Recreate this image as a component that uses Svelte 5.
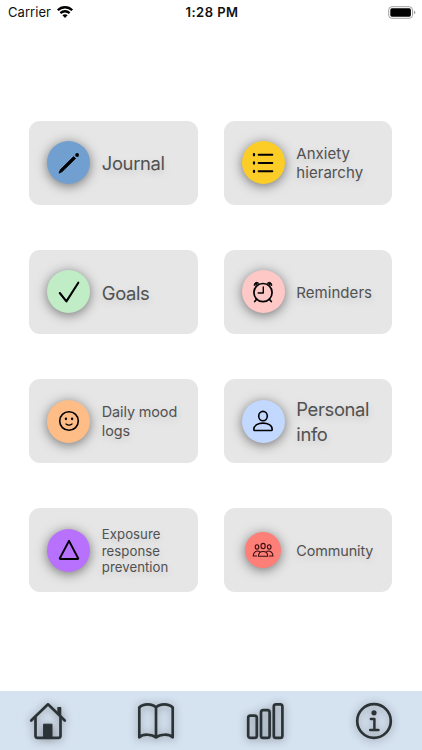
<script>
  const cards = [
    { icon: 'pencil', label: ['Journal'], color: '#719fd0', size: 's20' },
    { icon: 'list', label: ['Anxiety', 'hierarchy'], color: '#fdcd27', size: 's16' },
    { icon: 'check', label: ['Goals'], color: '#c0edc6', size: 's20' },
    { icon: 'alarm', label: ['Reminders'], color: '#fec8c7', size: 's16' },
    { icon: 'smile', label: ['Daily mood', 'logs'], color: '#febd86', size: 's15' },
    { icon: 'person', label: ['Personal', 'info'], color: '#c2d8fe', size: 's20' },
    { icon: 'triangle', label: ['Exposure', 'response', 'prevention'], color: '#b871fd', size: 's14' },
    { icon: 'people', label: ['Community'], color: '#fe7e78', size: 's15', small: true }
  ];

  const tabs = ['home', 'book', 'stats', 'info'];
</script>

<div class="screen">
  <header class="status-bar">
    <div class="carrier">
      <span>Carrier</span>
      <svg width="16" height="12" viewBox="0 0 16 12" fill="none" stroke="#000" stroke-width="2.3">
        <path d="M0.8 4.3C4.8 0.2 11.2 0.2 15.2 4.3" />
        <path d="M3.4 7.1C6 4.6 10 4.6 12.6 7.1" />
        <path d="M5.4 9.2C6.9 7.8 9.1 7.8 10.6 9.2L8 11.9Z" fill="#000" stroke="none" />
      </svg>
    </div>
    <div class="time">1:28 PM</div>
    <div class="battery">
      <svg width="28" height="13" viewBox="0 0 28 13">
        <rect x="0.7" y="0.7" width="23.8" height="11.6" rx="3.2" fill="none" stroke="#a2a2a2" />
        <rect x="2.3" y="2.3" width="20.6" height="8.4" rx="1.6" />
        <path d="M25.8 4.6Q27.4 5.2 27.4 6.5T25.8 8.4Z" fill="#a2a2a2" />
      </svg>
    </div>
  </header>

  <main class="grid">
    {#each cards as card (card.icon)}
      <button class="card">
        <span class="icon-slot">
          <span class="circle" class:small={card.small} style="background: {card.color}">
            <svg width="22" height="22" viewBox="-1 -1 22 22" fill="none" stroke="#000" stroke-width="1.6" stroke-linecap="round" stroke-linejoin="round">
              {#if card.icon === 'pencil'}
                <path d="M0.2 19.8L1.3 16.7L14.6 3.6L16.6 5.5L3.2 18.6Z" fill="#000" stroke-width="0.8" />
                <circle cx="18.1" cy="2" r="1.9" fill="#000" stroke="none" />
              {:else if card.icon === 'list'}
                <path d="M5.7 1.7H19.3M5.7 10H19.3M5.7 18.3H19.3" stroke-width="2.1" />
                <path d="M1 1.2V2.3M1 9.5V10.6M1 17.8V18.9" stroke-width="2.3" />
              {:else if card.icon === 'check'}
                <path d="M0.8 11L7.4 19.4L19.3 0.7" stroke-width="2.1" />
              {:else if card.icon === 'alarm'}
                <circle cx="10" cy="10.6" r="9.1" stroke-width="1.7" />
                <path d="M10.3 5V11H5.2" stroke-width="1.4" />
                <path d="M3.7 17.2L1.7 19.6M16.3 17.2L18.3 19.6" />
                <path d="M1.2 3.2C1.2 0.5 3.8 -0.6 5.4 1ZM18.8 3.2C18.8 0.5 16.2 -0.6 14.6 1Z" fill="#000" stroke-width="1" />
              {:else if card.icon === 'smile'}
                <circle cx="10" cy="10" r="9.3" />
                <path d="M7 13Q10 15.2 13 13" stroke-width="1.3" />
                <ellipse cx="6.9" cy="7.8" rx="1.2" ry="1.4" fill="#000" stroke="none" />
                <ellipse cx="13.1" cy="7.8" rx="1.2" ry="1.4" fill="#000" stroke="none" />
              {:else if card.icon === 'person'}
                <ellipse cx="10" cy="5.1" rx="4.3" ry="4.7" />
                <path d="M0.8 18.4C0.8 10 19.2 10 19.2 18.4Q19.2 19.5 18.2 19.5H1.8Q0.8 19.5 0.8 18.4Z" />
              {:else if card.icon === 'triangle'}
                <path d="M10 0.9L0.9 18.1Q0.6 19.1 1.5 19.1H18.5Q19.4 19.1 19.1 18.1Z" stroke-width="2" />
              {:else}
                <g stroke="#3a0f0e" stroke-width="1.1">
                  <ellipse cx="10.1" cy="6.1" rx="2.1" ry="2.7" />
                  <ellipse cx="4" cy="6.9" rx="1.8" ry="2.2" />
                  <ellipse cx="16.2" cy="6.9" rx="1.8" ry="2.2" />
                  <path d="M5.5 16.2C5.5 10 14.7 10 14.7 16.2Z" />
                  <path d="M6.4 11.5C3.8 10.4 0.2 11.5 0.2 16H3.6M13.8 11.5C16.4 10.4 20 11.5 20 16H16.6" />
                </g>
              {/if}
            </svg>
          </span>
        </span>
        <span class="label {card.size}">
          {#each card.label as line}
            <span>{line}</span>
          {/each}
        </span>
      </button>
    {/each}
  </main>

  <nav class="tab-bar">
    {#each tabs as tab}
      <button class="tab" aria-label={tab}>
        <svg width="38" height="38" viewBox="-1 -1 38 38" fill="none" stroke="#2c3337" stroke-width="2.7" stroke-linecap="round" stroke-linejoin="round">
          {#if tab === 'home'}
            <path d="M1.2 17.5L18 1.3L34.8 17.5" />
            <path d="M5.5 14.5V32.8Q5.5 34.8 7.5 34.8H28.5Q30.5 34.8 30.5 32.8V14.5" />
            <path d="M28 10V4.8H30.6V13Z" fill="#2c3337" stroke-width="1.4" />
            <path d="M13.6 34V21.2H22V34Z" fill="#2c3337" stroke-width="1" />
          {:else if tab === 'book'}
            <path d="M18 4.5C14.5 0.2 5 0.2 1.3 4.5V34.4C5 30.6 14 31 18 34.6C22 31 31 30.6 34.7 34.4V4.5C31 0.2 21.5 0.2 18 4.5ZM18 4.5V34.4" />
          {:else if tab === 'stats'}
            <rect x="1.2" y="12.7" width="8.6" height="22.2" rx="2.2" />
            <rect x="14" y="7.2" width="8.6" height="27.7" rx="2.2" />
            <rect x="26.8" y="1.4" width="8.6" height="33.5" rx="2.2" />
          {:else}
            <circle cx="18" cy="18" r="16.8" />
            <circle cx="18" cy="9.8" r="2.6" fill="#2c3337" stroke="none" />
            <path d="M14.9 16H18.4V27M14.2 27H22.4" stroke-width="2.5" />
          {/if}
        </svg>
      </button>
    {/each}
  </nav>
</div>

<style>
  :global(body) {
    background: #fff;
  }

  .screen {
    height: 750px;
    display: flex;
    flex-direction: column;
    font-family: Inter, 'Liberation Sans', sans-serif;
    overflow: hidden;
  }

  button {
    border: none;
    padding: 0;
    margin: 0;
    background: none;
    font-family: inherit;
    text-align: left;
  }

  svg {
    display: block;
    flex: none;
    overflow: visible;
  }

  .status-bar {
    height: 24px;
    display: grid;
    grid-template-columns: 1fr auto 1fr;
    align-items: center;
    padding: 0 6px 0 8px;
    font-size: 13px;
    color: #111;
  }

  .carrier {
    display: flex;
    align-items: center;
    gap: 6px;
    letter-spacing: 0.05px;
  }

  .time {
    font-weight: 600;
    letter-spacing: 0.45px;
  }

  .battery {
    display: flex;
    justify-content: flex-end;
  }

  .grid {
    flex: 1;
    display: grid;
    grid-template-columns: 168.5px 168.5px;
    grid-auto-rows: 84px;
    gap: 45.2px 26px;
    align-content: start;
    padding: 96.7px 0 0 29.3px;
  }

  .card {
    display: flex;
    align-items: center;
    background: #e6e6e6;
    border-radius: 11px;
    padding-left: 18px;
  }

  .icon-slot {
    width: 43px;
    height: 43px;
    flex: none;
    display: flex;
    align-items: center;
    justify-content: center;
    margin-right: 11.5px;
  }

  .circle {
    width: 43px;
    height: 43px;
    border-radius: 50%;
    display: flex;
    align-items: center;
    justify-content: center;
    box-shadow: 0 2px 12px rgba(0, 0, 0, 0.5);
  }

  .circle.small {
    width: 36px;
    height: 36px;
  }

  .label {
    display: flex;
    flex-direction: column;
    padding-top: 1px;
    color: #515151;
    white-space: nowrap;
    text-shadow: 0 3px 8px rgba(0, 0, 0, 0.14);
  }

  .s20 { font-size: 18.4px; line-height: 24.7px; letter-spacing: -0.35px; padding-top: 2px; }
  .s16 { font-size: 15px; line-height: 19px; letter-spacing: 0.05px; }
  .s15 { font-size: 14.4px; line-height: 18.2px; letter-spacing: -0.1px; }
  .s14 { font-size: 13.2px; line-height: 16.3px; letter-spacing: 0.05px; }

  .tab-bar {
    height: 59px;
    display: flex;
    justify-content: space-between;
    align-items: center;
    background: #d5e2f0;
    padding: 0 29px 0 28.5px;
  }

  .tab svg {
    filter: drop-shadow(0 1px 4px rgba(0, 0, 0, 0.4));
  }
</style>
